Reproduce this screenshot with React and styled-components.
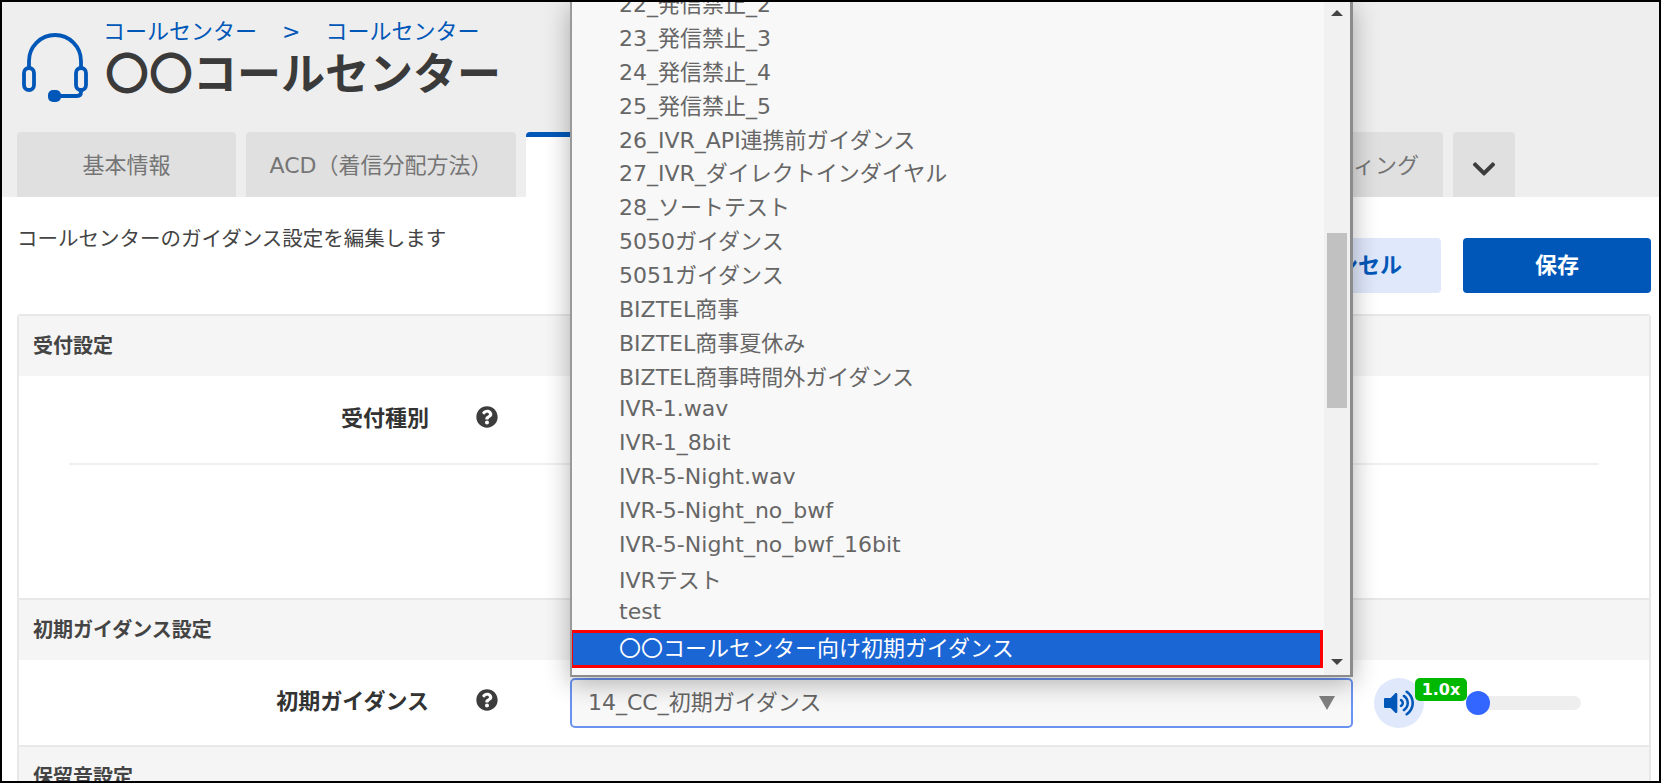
import styled, { createGlobalStyle } from 'styled-components';
import { FaChevronDown, FaQuestionCircle, FaVolumeUp } from 'react-icons/fa';

const fontStack = `"DejaVu Sans", "Noto Sans CJK JP", sans-serif`;

const options = [
    '22_発信禁止_2',
    '23_発信禁止_3',
    '24_発信禁止_4',
    '25_発信禁止_5',
    '26_IVR_API連携前ガイダンス',
    '27_IVR_ダイレクトインダイヤル',
    '28_ソートテスト',
    '5050ガイダンス',
    '5051ガイダンス',
    'BIZTEL商事',
    'BIZTEL商事夏休み',
    'BIZTEL商事時間外ガイダンス',
    'IVR-1.wav',
    'IVR-1_8bit',
    'IVR-5-Night.wav',
    'IVR-5-Night_no_bwf',
    'IVR-5-Night_no_bwf_16bit',
    'IVRテスト',
    'test',
    '〇〇コールセンター向け初期ガイダンス',
    'かいろみり',
];

const HeadsetIcon = () => (
    <svg width="66" height="71" viewBox="0 0 66 71" fill="none" stroke="#0057b8" strokeWidth="3.8">
        <path d="M7 35 V28 a26 26 0 0 1 52 0 V35" />
        <rect x="2" y="35" width="10" height="22" rx="5" />
        <rect x="54" y="35" width="10" height="22" rx="5" />
        <path d="M59 57 V59 Q59 63 55 63 H36" />
        <rect x="26" y="57" width="13" height="12" rx="5" fill="#0057b8" stroke="none" />
    </svg>
);

const App = () => {
    return (
        <Frame>
            <GlobalStyle />
            <Header>
                <TitleBlock>
                    <HeadsetIcon />
                    <TitleText>
                        <Breadcrumb>
                            <span>コールセンター</span>
                            <span>&gt;</span>
                            <span>コールセンター</span>
                        </Breadcrumb>
                        <Title>〇〇コールセンター</Title>
                    </TitleText>
                </TitleBlock>
                <Tabs>
                    <Tab $width={219}>基本情報</Tab>
                    <Tab $width={270}>ACD（着信分配方法）</Tab>
                    <Tab $width={400} $active>ガイダンス</Tab>
                    <Tab $width={507} $end>ルーティング</Tab>
                    <ChevronTab><FaChevronDown size={26} color="#3d3d3d" /></ChevronTab>
                </Tabs>
            </Header>

            <Body>
                <Toolbar>
                    <Description>コールセンターのガイダンス設定を編集します</Description>
                    <Actions>
                        <CancelButton>キャンセル</CancelButton>
                        <SaveButton>保存</SaveButton>
                    </Actions>
                </Toolbar>

                <Panel>
                    <SectionHeader>受付設定</SectionHeader>
                    <ReceptionBlock>
                        <Row $height={87}>
                            <Label>受付種別</Label>
                            <HelpIcon><FaQuestionCircle size={22} /></HelpIcon>
                        </Row>
                        <Divider />
                    </ReceptionBlock>

                    <SectionHeader $ruled>初期ガイダンス設定</SectionHeader>
                    <Row $height={85}>
                        <Label>初期ガイダンス</Label>
                        <HelpIcon><FaQuestionCircle size={22} /></HelpIcon>
                        <SelectBox>
                            14_CC_初期ガイダンス
                            <Caret />
                        </SelectBox>
                        <Player>
                            <SpeakerButton><FaVolumeUp size={30} /></SpeakerButton>
                            <SpeedBadge>1.0x</SpeedBadge>
                            <SliderTrack><SliderThumb /></SliderTrack>
                        </Player>
                    </Row>

                    <SectionHeader $ruled>保留音設定</SectionHeader>
                </Panel>
            </Body>

            <Dropdown>
                <OptionList>
                    {options.map((name) => (
                        <Option key={name} $selected={name.startsWith('〇〇')}>{name}</Option>
                    ))}
                </OptionList>
                <Scrollbar>
                    <ScrollArrow $up />
                    <ScrollTrack><ScrollThumb /></ScrollTrack>
                    <ScrollArrow />
                </Scrollbar>
            </Dropdown>
        </Frame>
    );
};

const GlobalStyle = createGlobalStyle`
    html, body {
        margin: 0;
        padding: 0;
        background: #fff;
    }
    body {
        font-family: ${fontStack};
        color: #333;
    }
`;

const Frame = styled.div`
    position: relative;
    box-sizing: border-box;
    width: 1661px;
    height: 783px;
    border: 2px solid #000;
    overflow: hidden;
    background: #fff;
`;

const Header = styled.header`
    height: 195px;
    display: flex;
    flex-direction: column;
    justify-content: space-between;
    background: #eee;
`;

const TitleBlock = styled.div`
    display: flex;
    align-items: flex-start;
    gap: 17px;
    padding: 10px 0 0 20px;
    svg {
        margin-top: 21px;
    }
`;

const TitleText = styled.div`
    display: flex;
    flex-direction: column;
`;

const Breadcrumb = styled.div`
    display: flex;
    gap: 25px;
    height: 38px;
    margin-left: -2px;
    line-height: 40px;
    font-size: 22px;
    color: #0057b8;
`;

const Title = styled.h1`
    margin: 0;
    height: 50px;
    line-height: 50px;
    font-size: 44px;
    font-weight: 700;
    color: #3a3a3a;
`;

const Tabs = styled.nav`
    display: flex;
    gap: 10px;
    padding-left: 15px;
`;

const Tab = styled.div`
    box-sizing: border-box;
    width: ${(p) => p.$width}px;
    height: 65px;
    display: flex;
    align-items: center;
    justify-content: ${(p) => (p.$end ? 'flex-end' : 'center')};
    padding: 0 ${(p) => (p.$end ? '24px' : '0')} 4px 0;
    border-radius: 4px 4px 0 0;
    border-top: ${(p) => (p.$active ? '5px solid #0057b8' : 'none')};
    background: ${(p) => (p.$active ? '#fff' : '#e0e0e0')};
    font-size: 22px;
    color: #757575;
`;

const ChevronTab = styled(Tab)`
    width: 62px;
    padding: 8px 0 0;
`;

const Body = styled.main`
    padding: 20px 8px 0 15px;
`;

const Toolbar = styled.div`
    display: flex;
    justify-content: space-between;
    align-items: flex-start;
    margin-bottom: 21px;
`;

const Description = styled.p`
    margin: 10px 0 0;
    line-height: 24px;
    font-size: 20.5px;
    color: #444;
`;

const Actions = styled.div`
    display: flex;
    gap: 22px;
    margin-top: 21px;
`;

const CancelButton = styled.button`
    width: 188px;
    height: 55px;
    padding: 0 0 6px;
    border: none;
    border-radius: 4px;
    background: #e0e8fc;
    color: #0057b8;
    font-family: inherit;
    font-size: 22px;
    font-weight: 700;
`;

const SaveButton = styled(CancelButton)`
    background: #0057b8;
    color: #fff;
`;

const Panel = styled.section`
    border: 2px solid #e8e8e8;
    border-bottom: none;
    border-radius: 4px 4px 0 0;
`;

const SectionHeader = styled.h2`
    margin: 0;
    box-sizing: border-box;
    height: ${(p) => (p.$ruled ? '62px' : '60px')};
    display: flex;
    align-items: center;
    padding: 0 0 4px 14px;
    border-top: ${(p) => (p.$ruled ? '2px solid #e8e8e8' : 'none')};
    background: #f5f5f5;
    font-size: 20px;
    font-weight: 700;
    color: #444;
`;

const ReceptionBlock = styled.div`
    height: 222px;
`;

const Row = styled.div`
    height: ${(p) => p.$height}px;
    display: flex;
    align-items: center;
`;

const Label = styled.div`
    width: 410px;
    margin-bottom: 7px;
    text-align: right;
    font-size: 22px;
    font-weight: 700;
    color: #333;
`;

const HelpIcon = styled.span`
    display: flex;
    margin: 0 0 6px 47px;
    color: #3d3d3d;
`;

const Divider = styled.hr`
    margin: 0 50px 0 50px;
    border: none;
    border-top: 2px solid #f0f0f0;
`;

const SelectBox = styled.div`
    position: relative;
    box-sizing: border-box;
    width: 783px;
    height: 50px;
    margin-left: 72px;
    padding: 0 0 6px 16px;
    display: flex;
    align-items: center;
    border: 2px solid #6a92f0;
    border-radius: 5px;
    background: #f8f8f8;
    font-size: 22px;
    color: #666;
`;

const Caret = styled.span`
    position: absolute;
    right: 16px;
    top: 16px;
    border-left: 8px solid transparent;
    border-right: 8px solid transparent;
    border-top: 14px solid #808080;
`;

const Player = styled.div`
    position: relative;
    display: flex;
    align-items: center;
    margin-left: 21px;
`;

const SpeakerButton = styled.div`
    width: 50px;
    height: 50px;
    display: flex;
    align-items: center;
    justify-content: center;
    border-radius: 50%;
    background: #e0e8fc;
    color: #0057b8;
`;

const SpeedBadge = styled.span`
    position: absolute;
    left: 41px;
    top: 0;
    width: 52px;
    height: 23px;
    display: flex;
    align-items: center;
    justify-content: center;
    border-radius: 5px;
    background: #00b800;
    color: #fff;
    font-size: 16px;
    font-weight: 700;
    z-index: 1;
`;

const SliderTrack = styled.div`
    position: relative;
    width: 115px;
    height: 14px;
    margin-left: 42px;
    border-radius: 7px;
    background: #eee;
`;

const SliderThumb = styled.span`
    position: absolute;
    left: 0;
    top: -5px;
    width: 24px;
    height: 24px;
    border-radius: 50%;
    background: #3366ff;
`;

const Dropdown = styled.div`
    position: absolute;
    left: 568px;
    top: -2px;
    box-sizing: border-box;
    width: 783px;
    height: 677px;
    display: flex;
    overflow: hidden;
    border-left: 2px solid #9a9a9a;
    border-right: 3px solid #8c8c8c;
    border-bottom: 2px solid #8c8c8c;
    background: #f8f8f8;
    box-shadow: 0 6px 24px rgba(0, 0, 0, 0.3);
`;

const OptionList = styled.ul`
    flex: 1;
    margin: -15px 0 0;
    padding: 0;
    list-style: none;
`;

const Option = styled.li`
    position: relative;
    box-sizing: border-box;
    height: 33.9px;
    display: flex;
    align-items: center;
    margin: ${(p) => (p.$selected ? '3px 3px 0 0' : '0')};
    padding: ${(p) => (p.$selected ? '0 0 6px 47px' : '0 0 0 47px')};
    font-size: 22px;
    white-space: nowrap;
    color: ${(p) => (p.$selected ? '#fff' : '#666')};
    background: ${(p) => (p.$selected ? '#1a66d4' : 'transparent')};
    outline: ${(p) => (p.$selected ? '3px solid #f00' : 'none')};
    outline-offset: -1px;
    z-index: ${(p) => (p.$selected ? 1 : 0)};
`;

const Scrollbar = styled.div`
    flex: none;
    width: 26px;
    display: flex;
    flex-direction: column;
    background: #f1f1f1;
`;

const ScrollArrow = styled.div`
    height: 26px;
    display: flex;
    align-items: center;
    justify-content: center;
    &::after {
        content: '';
        border-left: 6px solid transparent;
        border-right: 6px solid transparent;
        ${(p) => (p.$up ? 'border-bottom: 6px solid #444;' : 'border-top: 6px solid #444;')}
    }
`;

const ScrollTrack = styled.div`
    flex: 1;
    padding: 207px 3px 0 3px;
`;

const ScrollThumb = styled.div`
    height: 175px;
    background: #c1c1c1;
`;

export default App;
